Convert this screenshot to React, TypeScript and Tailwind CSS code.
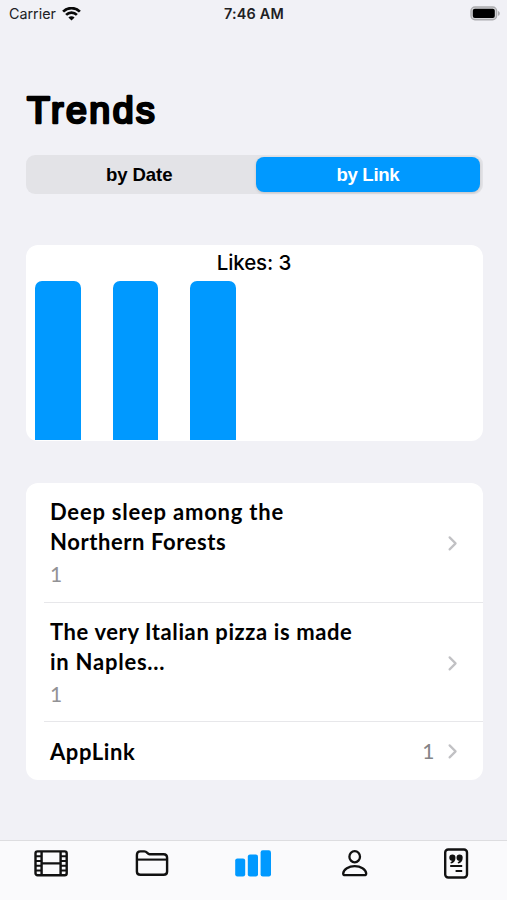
const links = [
  { title: ["Deep sleep among the", "Northern Forests"], likes: 1, tracking: ["tracking-[0.78px]", "tracking-[0.58px]"] },
  { title: ["The very Italian pizza is made", "in Naples..."], likes: 1, tracking: ["tracking-[0.6px]", "tracking-[0.75px]"] },
];

const bars = links.length + 1;

const Chevron = () => (
  <svg width="10" height="16" viewBox="0 0 10 16" fill="none" className="shrink-0">
    <path d="M1.6 2.4 7.6 8.4l-6 6" stroke="#c1c1c4" strokeWidth="2.2" strokeLinecap="round" strokeLinejoin="round" />
  </svg>
);

const StatusBar = () => (
  <div className="flex h-7 items-center justify-between pl-[9px] pr-[7px] text-[#202023] font-['Inter','Liberation_Sans',sans-serif]">
    <div className="flex flex-1 items-center gap-[6px]">
      <span className="text-[14.3px] tracking-[0px]">Carrier</span>
      <svg width="19" height="15" viewBox="0 0 19 15" fill="none" stroke="#080808" strokeWidth="2.7">
        <path d="M1.1 4.6a11.9 11.9 0 0 1 16.8 0" />
        <path d="M4.1 7.9a7.7 7.7 0 0 1 10.8 0" />
        <path d="M9.5 13.6 6.4 10.5a4.4 4.4 0 0 1 6.2 0Z" fill="#080808" stroke="none" />
      </svg>
    </div>
    <span className="pr-px text-[14.4px] font-semibold tracking-[0.2px]">7:46 AM</span>
    <div className="flex flex-1 justify-end pb-[2px]">
      <svg width="30" height="15" viewBox="0 0 30 15">
        <rect x="1" y="1" width="25.6" height="12.8" rx="4" fill="#d5d5d8" stroke="#acacaf" strokeWidth="1.4" />
        <rect x="2.8" y="2.8" width="22" height="9.2" rx="2" fill="#000" />
        <path d="M28 5c2.4.7 2.4 4.1 0 4.8Z" fill="#acacaf" />
      </svg>
    </div>
  </div>
);

const TabBar = () => (
  <div className="grid h-[60px] grid-cols-5 justify-items-center border-t border-[#dddde0] bg-[#fafafc] pt-[5px]">
    <svg width="40" height="36" viewBox="0 0 40 36" fill="none" stroke="#111" strokeWidth="2.4">
      <rect x="4.5" y="5.4" width="31.2" height="23.8" rx="2" />
      <path d="M10.6 6v23M29.6 6v23M10.6 17.4h19" />
      <path d="M5 10.2h5M5 15h5M5 19.8h5M5 24.6h5M30 10.2h5M30 15h5M30 19.8h5M30 24.6h5" strokeWidth="2" />
    </svg>
    <svg width="40" height="36" viewBox="0 0 40 36" fill="none" stroke="#111" strokeWidth="2.4" strokeLinejoin="round">
      <path d="M4.9 25.5V9q0-3.6 3.5-3.6h3.9c2.9 0 3 2.8 5.3 2.8h14q3.5 0 3.5 3.5v13.8q0 3.3-3.5 3.3H8.4q-3.5 0-3.5-3.3Z" />
      <path d="M4.9 13.6h30.2" strokeWidth="2.1" />
    </svg>
    <svg width="40" height="36" viewBox="0 0 40 36" fill="#0099ff">
      <rect x="2.2" y="12.4" width="10" height="18" rx="2.2" />
      <rect x="14.8" y="8.4" width="10.2" height="22" rx="2.2" />
      <rect x="27.6" y="4.2" width="10.4" height="26.2" rx="2.2" />
    </svg>
    <svg width="40" height="36" viewBox="0 0 40 36" fill="none" stroke="#111" strokeWidth="2.3">
      <ellipse cx="19.7" cy="10.7" rx="5.3" ry="5.6" />
      <path d="M10.2 29.2q-2 0-2-1.8c.4-4.2 5.5-7.2 11.5-7.2s11.1 3 11.5 7.2q0 1.8-2 1.8Z" strokeLinejoin="round" />
    </svg>
    <svg width="40" height="36" viewBox="0 0 40 36" fill="none" stroke="#111" strokeWidth="2.4">
      <rect x="9.2" y="3.5" width="21.8" height="28" rx="3" />
      <path d="M14.2 20.1h12M19.6 24.9h6.6" strokeWidth="2" />
      <path d="M19.5 11.7c0 3.4-1.9 5.3-4.6 5.9l-.5-1.1 2-1.7a3.1 3.1 0 1 1 3.1-3.1ZM26.7 11.7c0 3.4-1.9 5.3-4.6 5.9l-.5-1.1 2-1.7a3.1 3.1 0 1 1 3.1-3.1Z" fill="#111" stroke="none" />
    </svg>
  </div>
);

const App = () => {
  return (
    <div className="flex h-[900px] w-[507px] flex-col overflow-hidden bg-[#f1f1f6] text-black">
      <StatusBar />
      <main className="flex-1 pl-[25.5px] pr-[24.5px] pt-[57px]">
        <h1>
          <svg width="140" height="50" className="block">
            <text
              x="1"
              y="37.6"
              fill="#000"
              stroke="#000"
              strokeWidth="2.7"
              strokeLinejoin="round"
              className="text-[37.5px] font-normal tracking-[2.5px] font-['Liberation_Sans',Arial,sans-serif]"
            >
              Trends
            </text>
          </svg>
        </h1>
        <div className="mt-5 flex h-[39px] rounded-[9px] bg-[#e3e3e7] p-[2px] pr-[2.6px] text-[18.6px] font-bold font-['Liberation_Sans',Arial,sans-serif]">
          <button className="flex-1 pr-[5px] pt-px tracking-[-0.1px]">by Date</button>
          <button className="w-[224px] rounded-lg bg-[#0099ff] pt-px tracking-[-0.3px] text-white shadow-[0_1px_3px_rgba(0,0,0,0.15)]">
            by Link
          </button>
        </div>
        <section className="mt-[51px] flex h-[196px] flex-col rounded-xl bg-white">
          <h2 className="h-[36px] pt-[3px] text-center text-[20.5px] leading-[30px] font-medium tracking-[-0.1px] font-['Inter','Liberation_Sans',sans-serif]">
            Likes: {bars}
          </h2>
          <div className="flex h-[159px] gap-8 pl-[9.5px]">
            {Array.from({ length: bars }, (_, index) => (
              <div key={index} className="h-full w-[45.6px] rounded-t-[7px] bg-[#0099ff]" />
            ))}
          </div>
        </section>
        <section className="mt-[42px] rounded-xl bg-white font-['Lato','Open_Sans',sans-serif]">
          {links.map((link) => (
            <div key={link.title[0]} className="ml-[18px] flex h-[119.7px] items-center justify-between border-b border-[#e7e7ea] pl-[6.5px] pr-[25px] pt-[2px]">
              <div className="whitespace-nowrap">
                {link.title.map((line, index) => (
                  <p key={line} className={`text-[22px] leading-[30px] font-bold ${link.tracking[index]}`}>
                    {line}
                  </p>
                ))}
                <p className="mt-[2px] text-[21px] leading-[30px] text-[#929295]">{link.likes}</p>
              </div>
              <Chevron />
            </div>
          ))}
          <div className="flex h-[57.6px] items-center pl-[24.5px] pr-[25px]">
            <p className="flex-1 text-[22px] font-bold tracking-[0.6px]">AppLink</p>
            <span className="mr-[13px] text-[21px] text-[#848487]">1</span>
            <Chevron />
          </div>
        </section>
      </main>
      <TabBar />
    </div>
  );
};

export default App;
